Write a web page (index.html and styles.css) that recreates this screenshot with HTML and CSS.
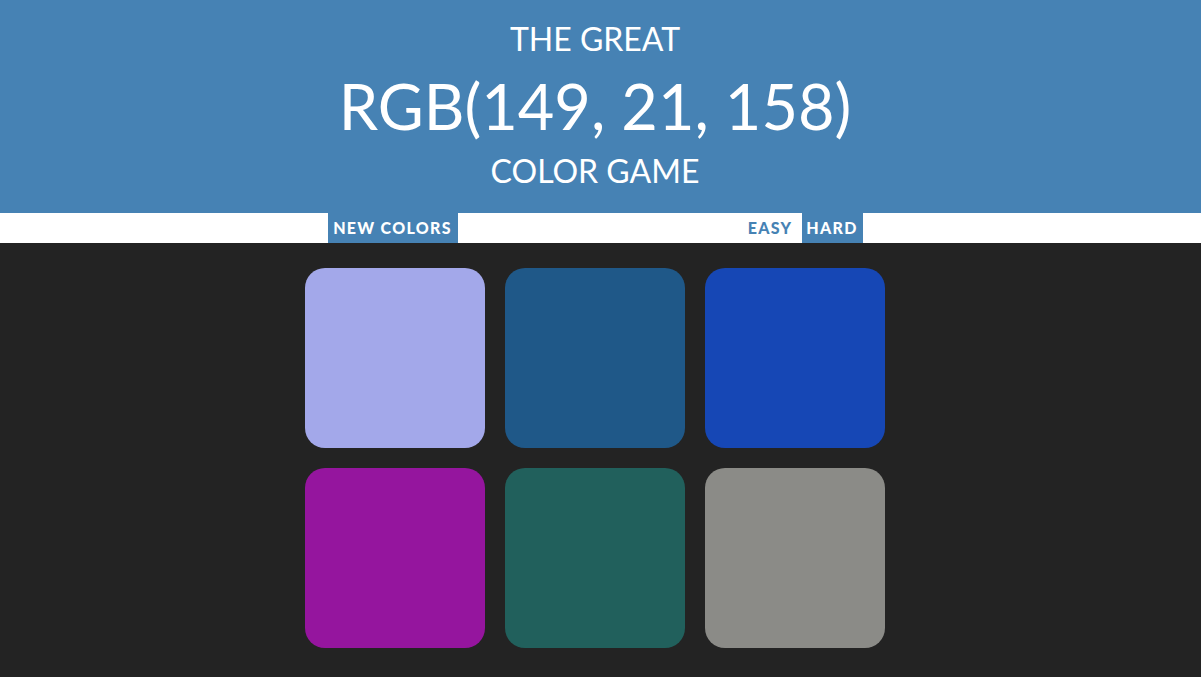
FILE: index.html
```html
<!DOCTYPE html>
<html>
<head>
<meta charset="utf-8">
<title>Color Game</title>
<link rel="stylesheet" href="styles.css">
</head>
<body>
<header class="header">
  <div class="title-small">THE GREAT</div>
  <div class="title-rgb">RGB(149, 21, 158)</div>
  <div class="title-small title-last">COLOR GAME</div>
</header>
<nav class="stripe">
  <button class="btn btn-new">NEW COLORS</button>
  <span class="message"></span>
  <button class="btn btn-mode">EASY</button>
  <button class="btn btn-mode selected">HARD</button>
</nav>
<div class="page">
  <main class="board">
    <div class="square sq1"></div>
    <div class="square sq2"></div>
    <div class="square sq3"></div>
    <div class="square sq4"></div>
    <div class="square sq5"></div>
    <div class="square sq6"></div>
  </main>
</div>
</body>
</html>
```
FILE: styles.css
```css
html, body {
  margin: 0;
  padding: 0;
}
body {
  background: #232323;
  font-family: Lato, "Open Sans", sans-serif;
  color: #fff;
}
.header {
  background: #4682b4;
  text-align: center;
  padding: 21px 11px 25px 0;
  height: 213px;
  box-sizing: border-box;
}
.title-small {
  font-size: 32px;
  line-height: 35px;
  font-weight: 400;
}
.title-rgb {
  font-size: 63px;
  line-height: 70px;
  margin-top: 15px;
}
.title-last {
  margin-top: 12px;
}
.stripe {
  background: #fff;
  height: 30px;
  display: flex;
  justify-content: center;
  padding-right: 11px;
}
.btn {
  border: none;
  background: #fff;
  color: #4682b4;
  font-family: Lato, sans-serif;
  font-weight: 900;
  font-size: 16px;
  letter-spacing: 1.3px;
  height: 30px;
  padding: 0 0 2px;
  margin: 0;
  cursor: pointer;
}
.btn-new {
  background: #4682b4;
  color: #fff;
  width: 130px;
}
.message {
  width: 282px;
}
.btn-mode {
  width: 61px;
}
.btn-mode + .btn-mode {
  margin-left: 1px;
}
.selected {
  background: #4682b4;
  color: #fff;
}
.page {
  padding-right: 11px;
}
.board {
  width: 600px;
  margin: 15px auto 0;
  display: flex;
  flex-wrap: wrap;
}
.square {
  width: 180px;
  height: 180px;
  margin: 10px;
  border-radius: 20px;
}
.sq1 { background: #a3a8ea; }
.sq2 { background: #1f5888; }
.sq3 { background: #1647b5; }
.sq4 { background: #95159e; }
.sq5 { background: #21605c; }
.sq6 { background: #8b8b87; }
```
